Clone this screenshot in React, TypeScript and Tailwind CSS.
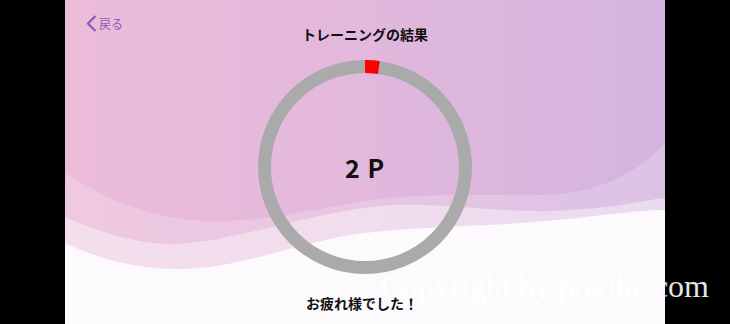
const jp = { fontFamily: '"Noto Sans CJK JP", "Noto Sans", sans-serif' };

function Waves() {
  return (
    <svg className="absolute inset-0" width="600" height="324" viewBox="0 0 600 324">
      <path
        d="M0,173 C40,200 90,220 145,221 C220,222 280,200 335,197 C400,193 460,197 495,194 C540,190 575,170 600,143 L600,324 L0,324 Z"
        fill="#ffffff"
        fillOpacity="0.2"
      />
      <path
        d="M0,217 C40,235 80,245 110,244 C170,242 260,208 328,205 C380,203 430,212 480,211 C540,210 580,200 600,198 L600,324 L0,324 Z"
        fill="#ffffff"
        fillOpacity="0.4"
      />
      <path
        d="M0,243 C40,262 80,270 120,269 C180,267 240,240 300,233 C360,226 420,226 470,222 C530,217 570,210 600,210 L600,324 L0,324 Z"
        fill="#fdfafd"
      />
    </svg>
  );
}

function ScoreRing({ points }: { points: number }) {
  const r = 100.5;
  return (
    <div className="relative w-[214px] h-[214px] flex items-center justify-center">
      <svg className="absolute inset-0" width="214" height="214" viewBox="0 0 214 214">
        <circle cx="107" cy="107" r={r} fill="none" stroke="#aaaaaa" strokeWidth="13" />
        <circle
          cx="107"
          cy="107"
          r={r}
          fill="none"
          stroke="#ff0000"
          strokeWidth="13"
          strokeDasharray="14 1000"
          transform="rotate(-90 107 107)"
        />
      </svg>
      <span className="relative text-[25px] font-bold tracking-[0.04em] text-[#111] leading-none" style={jp}>
        {points} P
      </span>
    </div>
  );
}

export default function App() {
  return (
    <div className="w-[730px] h-[324px] bg-black flex justify-center overflow-hidden relative">
      <div className="relative w-[600px] h-[324px] overflow-hidden bg-gradient-to-r from-[#ecbcd9] via-[#e2b8dc] to-[#d3b4df]">
        <Waves />
        <div className="relative flex flex-col items-center" style={jp}>
          <div className="grid grid-cols-[1fr_auto_1fr] w-full">
            <button className="flex items-center gap-[2px] pl-[21px] pt-[15px] self-start text-[#8a5ab8]">
              <svg width="11" height="17" viewBox="0 0 11 17">
                <polyline points="9.5,1 2,8.5 9.5,16" fill="none" stroke="#8a5ab8" strokeWidth="2.2" />
              </svg>
              <span className="text-[12px] leading-[17px]">戻る</span>
            </button>
            <h1 className="pt-[24px] text-[14px] leading-[20px] font-bold text-[#111]">トレーニングの結果</h1>
            <div />
          </div>
          <div className="mt-[16px]">
            <ScoreRing points={2} />
          </div>
          <p className="mt-[19px] text-[14px] leading-[20px] font-bold text-[#111] pr-[6px]">お疲れ様でした！</p>
        </div>
      </div>
      <span
        className="absolute left-[381px] top-[268px] text-[32px] leading-[36px] text-white/90 whitespace-nowrap"
        style={{ fontFamily: '"Liberation Serif", serif' }}
      >
        Copyright by pokibe.com
      </span>
    </div>
  );
}
